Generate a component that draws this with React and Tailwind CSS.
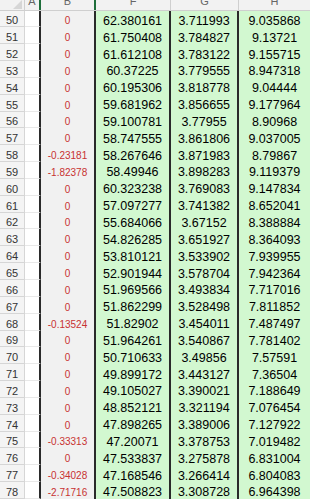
import React from "react";

const rows = [
  [50, "0", "62.380161", "3.711993", "9.035868"],
  [51, "0", "61.750408", "3.784827", "9.13721"],
  [52, "0", "61.612108", "3.783122", "9.155715"],
  [53, "0", "60.37225", "3.779555", "8.947318"],
  [54, "0", "60.195306", "3.818778", "9.04444"],
  [55, "0", "59.681962", "3.856655", "9.177964"],
  [56, "0", "59.100781", "3.77955", "8.90968"],
  [57, "0", "58.747555", "3.861806", "9.037005"],
  [58, "-0.23181", "58.267646", "3.871983", "8.79867"],
  [59, "-1.82378", "58.49946", "3.898283", "9.119379"],
  [60, "0", "60.323238", "3.769083", "9.147834"],
  [61, "0", "57.097277", "3.741382", "8.652041"],
  [62, "0", "55.684066", "3.67152", "8.388884"],
  [63, "0", "54.826285", "3.651927", "8.364093"],
  [64, "0", "53.810121", "3.533902", "7.939955"],
  [65, "0", "52.901944", "3.578704", "7.942364"],
  [66, "0", "51.969566", "3.493834", "7.717016"],
  [67, "0", "51.862299", "3.528498", "7.811852"],
  [68, "-0.13524", "51.82902", "3.454011", "7.487497"],
  [69, "0", "51.964261", "3.540867", "7.781402"],
  [70, "0", "50.710633", "3.49856", "7.57591"],
  [71, "0", "49.899172", "3.443127", "7.36504"],
  [72, "0", "49.105027", "3.390021", "7.188649"],
  [73, "0", "48.852121", "3.321194", "7.076454"],
  [74, "0", "47.898265", "3.389006", "7.127922"],
  [75, "-0.33313", "47.20071", "3.378753", "7.019482"],
  [76, "0", "47.533837", "3.275878", "6.831004"],
  [77, "-0.34028", "47.168546", "3.266414", "6.804083"],
  [78, "-2.71716", "47.508823", "3.308728", "6.964398"],
];

const grid = "grid grid-cols-[25px_16px_55px_75px_68px_71px]";

export default function App() {
  return (
    <div className="w-[310px] h-[500px] overflow-hidden bg-white font-['Liberation_Sans',Arial,sans-serif]">
      <div className={`${grid} h-[10.5px] bg-[#f2f2f2] border-b border-[#cfcfcf] overflow-hidden text-[11px] text-[#666] leading-none`}>
        <div className="relative border-r border-[#cfcfcf]">
          <svg className="absolute right-[2px] bottom-[1px]" width="12" height="9" viewBox="0 0 12 9">
            <polygon points="12,0 12,9 3,9" fill="#d6d6d6" />
          </svg>
        </div>
        <div className="flex justify-center border-r-2 border-[#1f6e3b]"><span className="-mt-[4px]">A</span></div>
        <div className="flex justify-center border-r-2 border-[#1f6e3b]"><span className="-mt-[4px]">B</span></div>
        <div className="flex justify-center border-r border-[#cfcfcf]"><span className="-mt-[4px]">F</span></div>
        <div className="flex justify-center border-r border-[#cfcfcf]"><span className="-mt-[4px]">G</span></div>
        <div className="flex justify-center"><span className="-mt-[4px]">H</span></div>
      </div>
      {rows.map(([n, b, f, g, h]) => (
        <div key={n} className={`${grid} h-[16.85px] leading-none`}>
          <div className="flex items-end justify-center bg-[#f4f4f4] border-r border-b border-[#d6d6d6] text-[11px] text-[#333]">{n}</div>
          <div className="bg-white border-r-2 border-[#2a2a2a] border-b border-b-[#e8e8e8]"></div>
          <div className="flex items-end justify-center pb-[1px] bg-[#f1f1f1] border-r-2 border-[#2a2a2a] text-[10px] text-[#c83232]">{b}</div>
          <div className="flex items-end justify-center bg-[#d2f8d0] border-r-2 border-[#2a2a2a] text-[12.5px] text-black">{f}</div>
          <div className="flex items-end justify-center bg-[#d2f8d0] border-r-2 border-[#2a2a2a] text-[12.5px] text-black">{g}</div>
          <div className="flex items-end justify-center bg-[#d2f8d0] text-[12.5px] text-black">{h}</div>
        </div>
      ))}
    </div>
  );
}
